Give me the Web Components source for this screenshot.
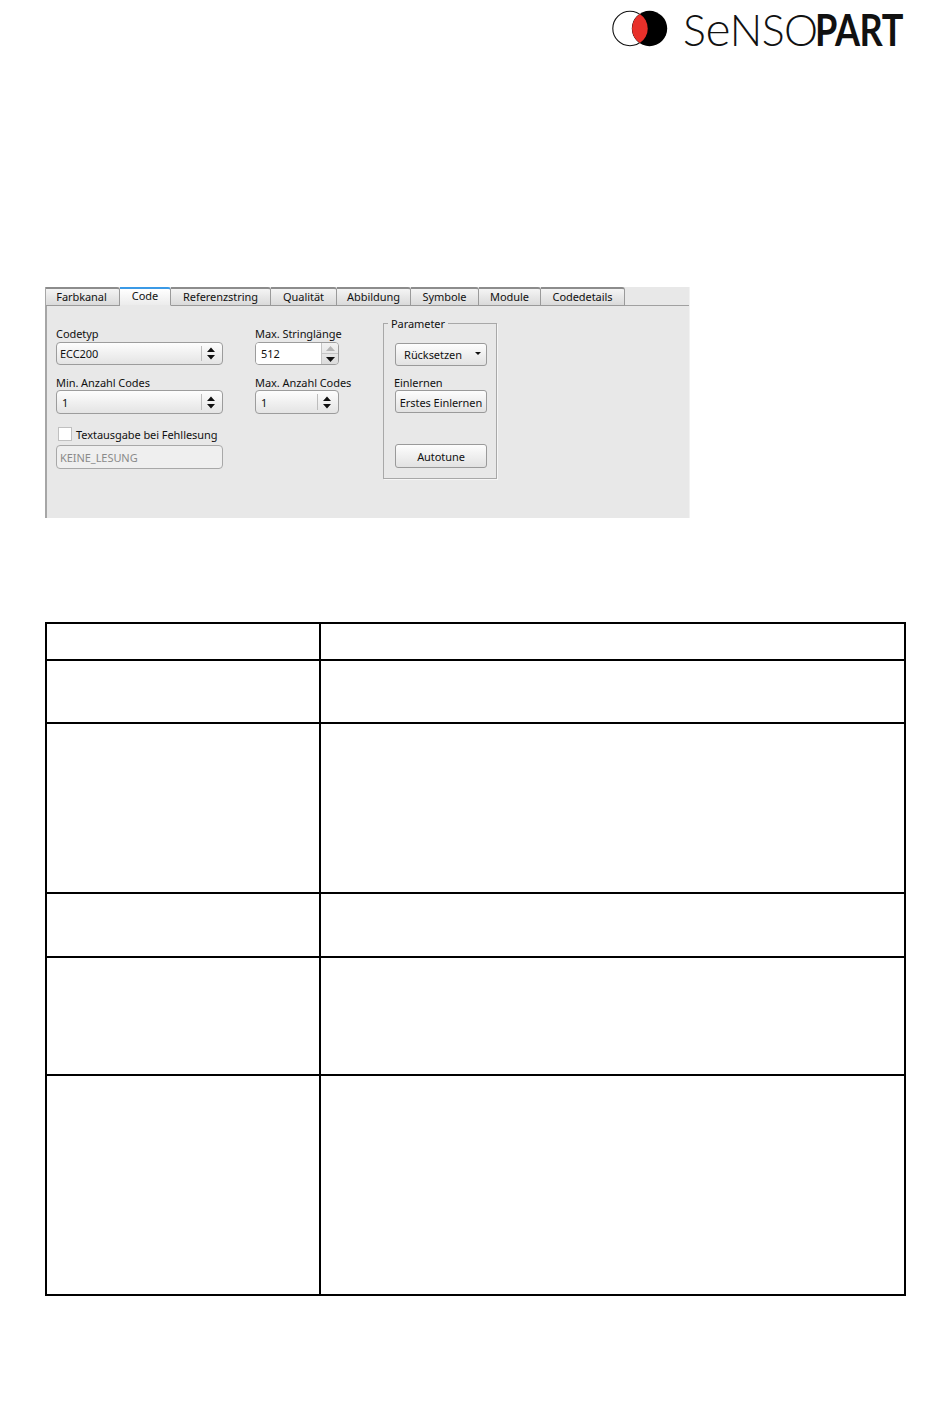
<!DOCTYPE html>
<html lang="de"><head><meta charset="utf-8"><title>SensoPart</title>
<style>
html,body{margin:0;background:#fff}
body{width:950px;height:1402px;overflow:hidden;font-family:"Noto Sans","Liberation Sans",sans-serif}
</style></head><body>
<sp-page>
<sp-logo slot="logo"></sp-logo>
<sp-panel slot="panel">
  <sp-tab first>Farbkanal</sp-tab><sp-tab active w="51">Code</sp-tab><sp-tab w="100">Referenzstring</sp-tab><sp-tab w="66">Qualität</sp-tab><sp-tab w="74">Abbildung</sp-tab><sp-tab w="68">Symbole</sp-tab><sp-tab w="62">Module</sp-tab><sp-tab w="84">Codedetails</sp-tab>
  <sp-col slot="c1" w="167">
    <sp-label first>Codetyp</sp-label>
    <sp-control kind="combo" h="23" dark>ECC200</sp-control>
    <sp-label gap="11">Min. Anzahl Codes</sp-label>
    <sp-control kind="combo" h="24" pad="5" low>1</sp-control>
    <sp-check>Textausgabe bei Fehllesung</sp-check>
    <sp-control kind="input" h="24" disabled low>KEINE_LESUNG</sp-control>
  </sp-col>
  <sp-col slot="c2" w="84">
    <sp-label first>Max. Stringlänge</sp-label>
    <sp-control kind="spin" h="23" pad="5" white>512</sp-control>
    <sp-label gap="11">Max. Anzahl Codes</sp-label>
    <sp-control kind="combo" h="24" pad="5" low>1</sp-control>
  </sp-col>
  <sp-group slot="c3" legend="Parameter">
    <sp-button h="23" menu>Rücksetzen</sp-button>
    <sp-label gap="10" shift="-1">Einlernen</sp-label>
    <sp-button h="23">Erstes Einlernen</sp-button>
    <sp-button h="24" gap="31">Autotune</sp-button>
  </sp-group>
</sp-panel>
<sp-table slot="table">
  <sp-row h="35"></sp-row><sp-row h="61"></sp-row><sp-row h="168"></sp-row><sp-row h="62"></sp-row><sp-row h="116"></sp-row><sp-row h="218" last></sp-row>
</sp-table>
</sp-page>
<script>
const def=(n,css,html,init)=>customElements.define(n,class extends HTMLElement{
  connectedCallback(){ if(this.shadowRoot)return; const s=this.attachShadow({mode:'open'}); s.innerHTML='<style>'+css+'</style>'+html; if(init)init(this,s);}
});
const updown='<svg width="8" height="13" viewBox="0 0 8 13"><path d="M4 .5 8 5H0zM0 8h8L4 12.5z" fill="#111"/></svg>';
def('sp-page',`:host{display:flex;flex-direction:column;height:1402px}
  .top{height:287px;box-sizing:border-box;display:flex;justify-content:flex-end;padding:10px 46px 0 0}
  .p{margin-left:45px}.t{margin:104px 0 0 45px}`,
  '<div class="top"><slot name="logo"></slot></div><div class="p"><slot name="panel"></slot></div><div class="t"><slot name="table"></slot></div>');
def('sp-logo',`:host{display:flex;align-items:flex-start;height:40px}
  svg{display:block;margin-right:15px}
  .w{font:300 43px/36px Lato,"Open Sans",sans-serif;color:#111;letter-spacing:-.6px;white-space:nowrap;display:flex;align-items:baseline;width:221px;height:36px}
  .e{font-size:48px}
  b{display:inline-block;font-weight:700;letter-spacing:-.6px;transform:scaleX(.84);transform-origin:0 50%;margin-left:-3px}`,
  `<svg width="57" height="37" viewBox="0 0 57 37"><circle cx="19" cy="18.5" r="17.2" fill="#fff" stroke="#111" stroke-width="1.1"/><circle cx="38.5" cy="18.5" r="17.7" fill="#000"/><path d="M28.8 3.9A17.6 17.6 0 0 0 28.8 33.1 17.4 17.4 0 0 0 28.8 3.9z" fill="#e8302a"/></svg><div class="w"><span>S</span><span class="e">e</span><span>NSO</span><b>PART</b></div>`);
def('sp-panel',`:host{display:block;width:645px;height:231px;box-sizing:border-box;background:#e8e8e8;border-left:2px solid #a6a6a6;border-right:1px solid #f2f2f2;font:11px/14px "Noto Sans","Liberation Sans",sans-serif;letter-spacing:-.06px;color:#111}
  .tabs{display:flex;height:19px;box-sizing:border-box;margin-left:-1px;border-bottom:1px solid #a0a0a0}
  .body{display:flex;padding-left:9px}
  .c1{margin-right:32px}.c2{margin-right:44px}`,
  '<div class="tabs"><slot></slot></div><div class="body"><div class="c1"><slot name="c1"></slot></div><div class="c2"><slot name="c2"></slot></div><slot name="c3"></slot></div>');
def('sp-tab',`:host{display:block;box-sizing:border-box;width:var(--w,74px);height:19px;text-align:center;line-height:15px;white-space:nowrap;background:linear-gradient(#f4f4f4,#dadada);border:1px solid #9a9a9a;border-top:2px solid #8c8c8c;border-left:0;border-radius:0 3px 0 0}
  :host([first]){padding-right:2px}
  :host([active]){background:linear-gradient(#fff,#ececec);border-top-color:#3b9ae6;border-bottom-color:#e8e8e8;line-height:13px}`,
  '<slot></slot>',(h)=>{h.style.setProperty('--w',(h.getAttribute('w')||74)+'px')});
def('sp-col',`:host{display:block;padding-top:22px;box-sizing:border-box}`,'<slot></slot>',(h)=>{h.style.width=h.getAttribute('w')+'px'});
def('sp-label',`:host{display:block;height:14px;line-height:14px;white-space:nowrap}
  :host([first]){line-height:12px}`,'<slot></slot>',(h)=>{
  if(h.getAttribute('gap'))h.style.marginTop=h.getAttribute('gap')+'px';
  if(h.getAttribute('shift'))h.style.marginLeft=h.getAttribute('shift')+'px';});
def('sp-control',`:host{display:flex;box-sizing:border-box;border:1px solid #9c9c9c;border-radius:4px;overflow:hidden;background:linear-gradient(#fdfdfd,#e4e4e4);align-items:stretch;line-height:20px}
  .t{flex:1;padding-left:var(--pad,3px);white-space:nowrap;display:flex;align-items:center}
  :host([low]) .t{padding-top:2px}
  :host([white]) .t{background:#fff}
  :host([disabled]){background:#efefef;color:#8a8a8a;border-color:#a8a8a8}
  .a{width:21px;box-sizing:border-box;padding-right:3px;border-left:1px solid #bdbdbd;margin:3px 0;display:flex;align-items:center;justify-content:center}
  .s{width:16px;border-left:1px solid #c4c4c4;display:flex;flex-direction:column;background:linear-gradient(#f2f2f2,#dcdcdc)}
  .s i{flex:1;display:flex;align-items:center;justify-content:center}
  .s i+i{border-top:1px solid #c4c4c4}`,
  '<div class="t"><slot></slot></div><span id="x" style="display:contents"></span>',(h,s)=>{
    h.style.height=h.getAttribute('h')+'px';
    if(h.getAttribute('pad'))h.style.setProperty('--pad',h.getAttribute('pad')+'px');
    const k=h.getAttribute('kind'),x=s.getElementById('x');
    if(k==='combo')x.innerHTML='<div class="a">'+updown+'</div>';
    if(k==='spin')x.innerHTML='<div class="s"><i><svg width="9" height="5"><path d="M4.5 0 9 5H0z" fill="#b4b4b4"/></svg></i><i><svg width="9" height="5"><path d="M0 0h9L4.5 5z" fill="#111"/></svg></i></div>';
  });
def('sp-check',`:host{display:flex;align-items:center;height:14px;margin:13px 0 4px 2px;white-space:nowrap}
  span{position:relative;top:1px}
  i{display:block;width:12px;height:12px;border:1px solid #c0c0c0;background:#fff;margin-right:4px;flex:none}`,'<i></i><span><slot></slot></span>');
def('sp-group',`:host{display:block;position:relative;box-sizing:border-box;width:114px;height:156px;margin-top:17px;border:1px solid #a8a8a8;box-shadow:1px 1px 0 #f6f6f6;padding:19px 9px 0 11px}
  .l{position:absolute;left:4px;top:-7px;padding:0 3px;background:#e8e8e8;line-height:14px;white-space:nowrap}`,
  '<div class="l"></div><slot></slot>',(h,s)=>{s.querySelector('.l').textContent=h.getAttribute('legend')});
def('sp-button',`:host{display:flex;box-sizing:border-box;align-items:center;justify-content:center;white-space:nowrap;border:1px solid #9a9a9a;border-radius:3px;background:linear-gradient(#fdfdfd,#e2e2e2);position:relative;padding-top:2px}
  :host([menu]){padding:0 16px 0 0}
  svg{position:absolute;right:5px;top:8px}`,
  '<slot></slot><span id="m" style="display:contents"></span>',(h,s)=>{
    h.style.height=h.getAttribute('h')+'px';
    if(h.getAttribute('gap'))h.style.marginTop=h.getAttribute('gap')+'px';
    if(h.hasAttribute('menu'))s.getElementById('m').innerHTML='<svg width="6" height="3"><path d="M0 0h6L3 3z" fill="#111"/></svg>';
  });
def('sp-table',`:host{display:block;width:861px;box-sizing:border-box;border:2px solid #000;border-bottom:0}`,'<slot></slot>');
def('sp-row',`:host{display:grid;grid-template-columns:272px 1fr;border-bottom:2px solid #000}
  div+div{border-left:2px solid #000}`,'<div></div><div></div>',(h)=>{h.style.height=h.getAttribute('h')+'px'});
</script>
</body></html>
